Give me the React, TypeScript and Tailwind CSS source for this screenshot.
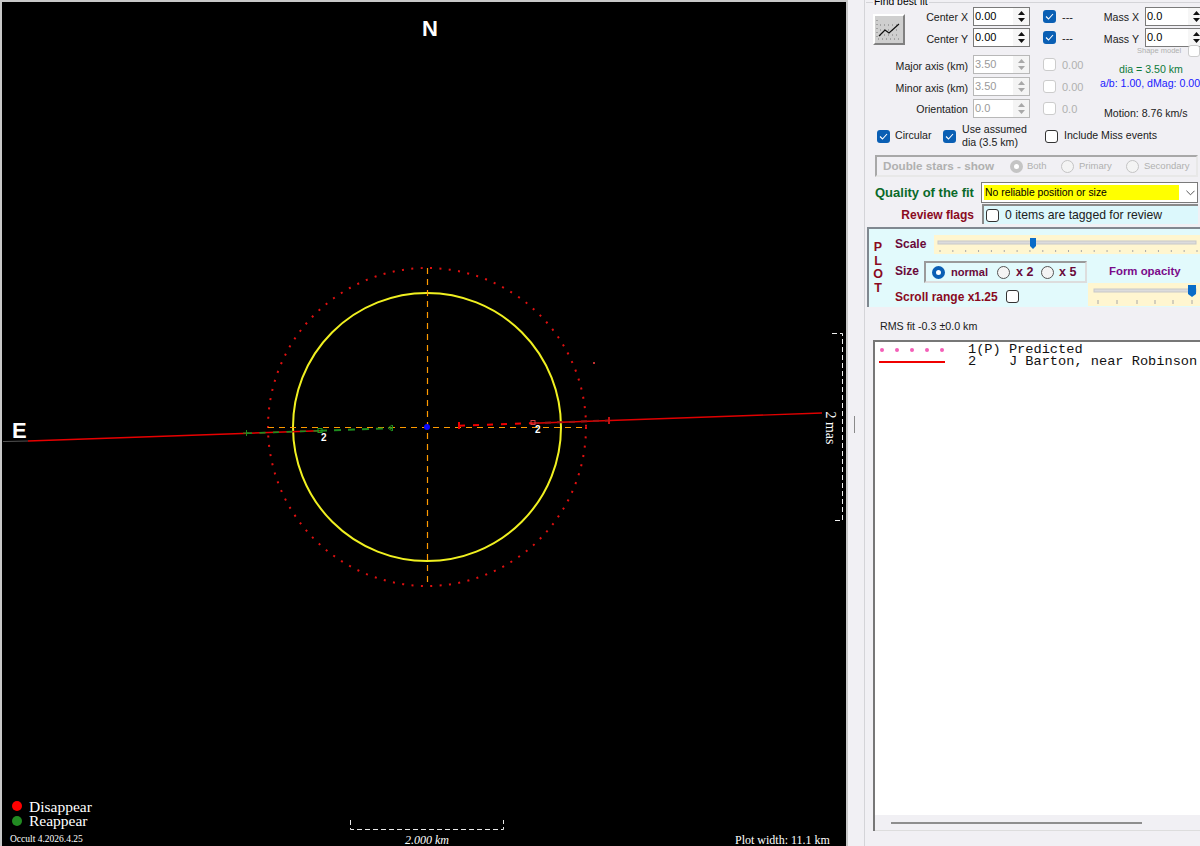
import React from 'react';

const ui = "font-['Liberation_Sans',Arial,sans-serif]";
const serif = "font-['Liberation_Serif','Times_New_Roman',serif]";

function Tick() {
  return (
    <svg viewBox="0 0 13 13" className="block w-[13px] h-[13px]">
      <path d="M3 6.5 L5.5 9 L10 4" fill="none" stroke="#fff" strokeWidth="1.1" />
    </svg>
  );
}

function Check({ on, off }: { on?: boolean; off?: boolean }) {
  if (on) return <span className="block w-[13px] h-[13px] rounded-[3px] bg-[#0a5fb4] shrink-0"><Tick /></span>;
  return <span className={`block w-[13px] h-[13px] rounded-[3px] border bg-white shrink-0 ${off ? 'border-[#cccccc]' : 'border-[#333333]'}`} />;
}

function Radio({ on, off }: { on?: boolean; off?: boolean }) {
  if (on) return <span className={`block w-[13px] h-[13px] rounded-full border-[4px] bg-white shrink-0 ${off ? 'border-[#c4c4c4]' : 'border-[#0a5fb4]'}`} />;
  return <span className={`block w-[13px] h-[13px] rounded-full border bg-[#f4f4f4] shrink-0 ${off ? 'border-[#c4c4c4]' : 'border-[#555555]'}`} />;
}

function Spin({ value, off, w = 'w-[57px]' }: { value: string; off?: boolean; w?: string }) {
  const arrow = off ? '#a8a8a8' : '#111111';
  return (
    <div className={`${w} h-[19px] bg-white border shrink-0 flex ${off ? 'border-[#b8b8b8] text-[#9a9a9a]' : 'border-[#7a7a7a] text-black'}`}>
      <span className="flex-1 text-[11px] leading-[16px] pl-[1px]">{value}</span>
      <span className={`w-[16px] flex flex-col justify-center gap-[3px] items-center ${off ? 'bg-[#f4f4f4]' : 'bg-[#f6f6f6]'}`}>
        <svg viewBox="0 0 7 4" className="w-[7px] h-[4px]"><path d="M3.5 0 L7 4 L0 4 Z" fill={arrow} /></svg>
        <svg viewBox="0 0 7 4" className="w-[7px] h-[4px]"><path d="M3.5 4 L7 0 L0 0 Z" fill={arrow} /></svg>
      </span>
    </div>
  );
}

function FitRow({ label, value, tail, off, h, tight }: { label: string; value: string; tail: string; off?: boolean; h: string; tight?: boolean }) {
  return (
    <div className={`flex items-start ${h}`}>
      <span className={`w-[95px] text-right text-[10.6px] leading-[19px] text-[#202020] whitespace-nowrap ${tight ? 'pt-[1px]' : 'pt-[2px]'}`}>{label}</span>
      <span className="w-[5px]" />
      <Spin value={value} off={off} />
      <span className="w-[13px]" />
      <span className="mt-[3px]"><Check on={!off} off={off} /></span>
      <span className={`ml-[6px] text-[11px] leading-[19px] pt-[1px] ${off ? 'text-[#b0b0b0]' : 'text-[#222222]'}`}>{tail}</span>
    </div>
  );
}

const scaleTicks = Array.from({ length: 21 }, (_, i) => 6 + i * 12.85);

function Plot() {
  const dash = '#ff9a00';
  return (
    <svg viewBox="0 0 844 844" className="block w-[844px] h-[844px]">
      <g transform="translate(-2,-2)">
        <circle cx="427" cy="427" r="159" fill="none" stroke="#e01010" strokeWidth="2" strokeDasharray="2 7.4" />
        <circle cx="427" cy="427" r="134" fill="none" stroke="#f0f020" strokeWidth="2" />
        <line x1="3" y1="441.5" x2="28" y2="441" stroke="#555" strokeWidth="1" />
        <line x1="28" y1="441" x2="320" y2="430.7" stroke="#e80000" strokeWidth="1.4" />
        <line x1="533" y1="423.2" x2="822" y2="413" stroke="#e00000" strokeWidth="1.4" />
        <line x1="427.5" x2="427.5" y1="268" y2="586" stroke={dash} strokeWidth="1.2" strokeDasharray="6 5" />
        <line x1="268" x2="586" y1="427.5" y2="427.5" stroke={dash} strokeWidth="1.2" strokeDasharray="6 5" />
        <line x1="320" y1="430.7" x2="392" y2="428.2" stroke="#1e8c1e" strokeWidth="2" strokeDasharray="7 7" />
        <line x1="246" y1="433.3" x2="320" y2="430.7" stroke="#1e8c1e" strokeWidth="1.6" strokeDasharray="6 7.5" />
        <line x1="459" y1="425.8" x2="533" y2="423.2" stroke="#f00000" strokeWidth="2" strokeDasharray="6 8" />
        <line x1="533" y1="423.2" x2="609" y2="420.5" stroke="#a01010" strokeWidth="2" strokeDasharray="6 6" />
        <circle cx="427" cy="427" r="3" fill="#0a0aff" />
        <path d="M246.5 430 V436 M243 433 L249 433" stroke="#1e8c1e" />
        <path d="M392.5 425 V431 M388 428 L392 425 M388 428 L392 431" stroke="#1e8c1e" fill="none" />
        <rect x="458" y="422" width="2" height="7" fill="#f00000" />
        <rect x="608" y="417" width="2" height="7" fill="#c01010" />
        <rect x="318" y="428.5" width="4" height="4" fill="none" stroke="#1e9c1e" />
        <rect x="531" y="420.5" width="4" height="4" fill="none" stroke="#d04040" />
        <rect x="593" y="362" width="2" height="2" fill="#c03030" />
        <path d="M350.5 820 V829.5 H503.5 V820" fill="none" stroke="#e8e8e8" strokeDasharray="5 3" />
        <path d="M832 333.5 H842.5 V520.5 H832" fill="none" stroke="#f0f0f0" strokeDasharray="5 3" />
      </g>
    </svg>
  );
}

function Canvas() {
  return (
    <div className="relative w-[844px] h-[844px] bg-black overflow-hidden text-white shrink-0">
      <Plot />
      <span className={`absolute left-[420px] top-[14px] text-[22px] leading-[26px] font-bold ${ui}`}>N</span>
      <span className={`absolute left-[10px] top-[416px] text-[22px] leading-[26px] font-bold ${ui}`}>E</span>
      <span className={`absolute left-[319px] top-[430px] text-[10px] leading-[11px] font-bold ${ui}`}>2</span>
      <span className={`absolute left-[533px] top-[422px] text-[10px] leading-[11px] font-bold ${ui}`}>2</span>
      <span className={`absolute left-[806px] top-[418px] w-[44px] text-center text-[14px] leading-[16px] rotate-90 whitespace-nowrap ${serif}`}>2 mas</span>
      <span className="absolute left-[10px] top-[799px] w-[10px] h-[10px] rounded-full bg-[#ff0000]" />
      <span className="absolute left-[10px] top-[814px] w-[10px] h-[10px] rounded-full bg-[#228b22]" />
      <span className={`absolute left-[27px] top-[798px] text-[15.5px] leading-[14px] ${serif}`}>Disappear</span>
      <span className={`absolute left-[27px] top-[812px] text-[15.5px] leading-[14px] ${serif}`}>Reappear</span>
      <span className={`absolute left-[8px] top-[831px] text-[9.5px] leading-[12px] ${serif}`}>Occult 4.2026.4.25</span>
      <span className={`absolute left-[403px] top-[831px] text-[12px] leading-[14px] italic ${serif}`}>2.000 km</span>
      <span className={`absolute left-[733px] top-[831px] text-[12px] leading-[14px] ${serif}`}>Plot width: 11.1 km</span>
    </div>
  );
}

function FitGroup() {
  return (
    <div className="h-[148px] relative">
      <span className="absolute left-[0px] right-0 top-[2px] h-[1px] bg-[#d4d4d8]" />
      <span className="absolute left-[7px] top-[-5px] text-[10.4px] leading-[14px] bg-[#f1f0f4] px-[1px]">Find best fit</span>
      <div className="flex pt-[7px] pl-[7px]">
        <div className="w-[212px] shrink-0">
          <div className="flex h-[40px]">
            <div className="mt-[7px] w-[32px] h-[31px] bg-[#cfcfcf] border-2 border-t-white border-l-white border-r-[#808080] border-b-[#808080] shrink-0">
              <svg viewBox="0 0 28 27" className="w-[28px] h-[27px]">
                <path d="M2 4 V23 H26 M5 19 H25 M5 14 H25 M5 9 H25" fill="none" stroke="#777" strokeDasharray="1 3" />
                <path d="M4 20 L10 14 L14 17 L24 8" fill="none" stroke="#111" strokeWidth="1.2" />
              </svg>
            </div>
            <div className="flex flex-col ml-[-32px]">
              <FitRow label="Center X" value="0.00" tail="---" h="h-[21px]" tight />
              <FitRow label="Center Y" value="0.00" tail="---" h="h-[19px]" />
            </div>
          </div>
          <div className="h-[8px]" />
          <FitRow label="Major axis (km)" value="3.50" tail="0.00" off h="h-[22px]" />
          <FitRow label="Minor axis (km)" value="3.50" tail="0.00" off h="h-[22px]" />
          <FitRow label="Orientation" value="0.0" tail="0.0" off h="h-[22px]" tight />
        </div>
        <div className="flex-1 relative text-[10.6px] leading-[14px] min-w-0">
          <div className="flex h-[21px] items-start">
            <span className="w-[54px] shrink-0 text-right pt-[3px] text-[#202020]">Mass X</span>
            <span className="ml-[6px] shrink-0"><Spin value="0.0" w="w-[60px]" /></span>
          </div>
          <div className="flex h-[19px] items-start">
            <span className="w-[54px] shrink-0 text-right pt-[4px] text-[#202020]">Mass Y</span>
            <span className="ml-[6px] shrink-0"><Spin value="0.0" w="w-[60px]" /></span>
          </div>
          <div className="flex items-center h-[8px]">
            <span className="w-[52px] shrink-0" />
            <span className="text-[7.5px] leading-[10px] text-[#b0b0b0] whitespace-nowrap">Shape model</span>
            <span className="ml-[7px] w-[12px] h-[12px] rounded-[3px] border border-[#cccccc] bg-white shrink-0" />
          </div>
          <div className="mt-[7px] pl-[34px] text-[#0d7a3a] whitespace-nowrap">dia = 3.50 km</div>
          <div className="pl-[15px] text-[#1a1aff] whitespace-nowrap">a/b: 1.00, dMag: 0.00</div>
          <div className="mt-[16px] pl-[19px] text-[#202020] whitespace-nowrap">Motion: 8.76 km/s</div>
        </div>
      </div>
      <div className="flex items-center absolute left-[11px] top-[126px] h-[20px] text-[10.6px] text-[#202020]">
        <Check on />
        <span className="ml-[5px] w-[35px]">Circular</span>
        <span className="ml-[13px]"><Check on /></span>
        <span className="ml-[6px] leading-[13px] w-[70px]">Use assumed dia (3.5 km)</span>
        <span className="ml-[13px]"><Check /></span>
        <span className="ml-[6px] whitespace-nowrap">Include Miss events</span>
      </div>
    </div>
  );
}

function Panel() {
  return (
    <div className={`flex-1 min-w-0 relative bg-[#f1f0f4] h-[846px] overflow-hidden pl-[18px] ${ui}`}>
      <span className="absolute left-[6px] top-[416px] w-[1px] h-[17px] bg-[#8a8a8a]" />
      <span className="absolute left-[16px] top-0 w-[1px] h-full bg-[#d4d4d8]" />

      <FitGroup />

      {/* double stars */}
      <div className="ml-[9px] mt-[7px] w-[323px] h-[22px] border-2 border-[#a8a8a8] border-r-[#e8e8e8] border-b-[#e8e8e8] flex items-center text-[#b0b0b0]">
        <span className="ml-[6px] text-[11.7px] font-bold w-[127px] whitespace-nowrap">Double stars - show</span>
        <Radio on off />
        <span className="ml-[4px] text-[9.5px] w-[34px]">Both</span>
        <Radio off />
        <span className="ml-[5px] text-[9.5px] w-[47px]">Primary</span>
        <Radio off />
        <span className="ml-[5px] text-[9.5px]">Secondary</span>
      </div>

      {/* quality */}
      <div className="flex items-center mt-[5px] h-[21px] ml-[9px]">
        <span className="w-[101px] text-[13px] font-bold text-[#0a6a2a] whitespace-nowrap">Quality of the fit</span>
        <div className="ml-[5px] w-[217px] h-[21px] bg-white border border-[#7a7a7a] flex items-center pl-[2px]">
          <span className="w-[195px] h-[15px] bg-[#ffff00] text-[10.4px] leading-[15px] text-black pl-[1px] whitespace-nowrap">No reliable position or size</span>
          <svg viewBox="0 0 10 6" className="ml-[7px] w-[9px] h-[6px]"><path d="M0.5 0.5 L5 5 L9.5 0.5" fill="none" stroke="#444" /></svg>
        </div>
      </div>
      <div className="flex items-center mt-[1px] h-[20px] ml-[9px]">
        <span className="w-[99px] text-right text-[12px] pt-[1px] font-bold text-[#8a0a1e] whitespace-nowrap">Review flags</span>
        <div className="ml-[8px] w-[216px] h-[20px] bg-[#dcf8fc] border-l-2 border-t-2 border-[#8a8a8a] flex items-center pl-[2px] text-[12.2px] text-[#202020]">
          <Check />
          <span className="ml-[6px] whitespace-nowrap">0 items are tagged for review</span>
        </div>
      </div>

      {/* plot box */}
      <div className="ml-[1px] mt-[3px] w-[333px] h-[80px] bg-[#e2fafc] border-l-2 border-t-2 border-[#808890] flex relative">
        <div className="w-[14px] ml-[2px] mr-[6px] mt-[12px] text-[12.5px] leading-[13.7px] font-bold text-[#8a0a1e] text-center">P<br />L<br />O<br />T</div>
        <div className="flex-1 min-w-0">
          <div className="flex h-[26px] items-start">
            <span className="ml-[4px] mt-[8px] w-[39px] shrink-0 text-[12px] leading-[14px] font-bold text-[#6a0a3a]">Scale</span>
            <div className="mt-[6px] w-[272px] shrink-0 h-[19px] bg-[#fff6d0]">
              <svg viewBox="0 0 272 19" className="block w-full h-full">
                <rect x="4" y="6" width="258" height="3" fill="#dcdcdc" stroke="#c8c8c8" />
                {scaleTicks.map(t => <line key={t} x1={t} x2={t} y1="15" y2="17" stroke="#a8a8a8" />)}
                <path d="M96 3 H102 V11 L99 14 L96 11 Z" fill="#0a6cc8" />
              </svg>
            </div>
          </div>
          <div className="flex h-[26px] items-start mt-[2px]">
            <span className="ml-[4px] mt-[7px] w-[29px] shrink-0 text-[12px] leading-[14px] font-bold text-[#6a0a3a]">Size</span>
            <div className="w-[163px] shrink-0 h-[22px] mt-[4px] border-2 border-[#9a9a9a] border-r-[#dddddd] border-b-[#dddddd] flex items-center pl-[6px] text-[11.1px] font-bold text-[#6a0a3a]">
              <Radio on />
              <span className="ml-[6px] w-[37px]">normal</span>
              <span className="ml-[9px]"><Radio /></span>
              <span className="ml-[6px] w-[18px] text-[12.5px]">x 2</span>
              <span className="ml-[7px]"><Radio /></span>
              <span className="ml-[5px] text-[12.5px]">x 5</span>
            </div>
            <span className="ml-[22px] mt-[7px] text-[11.4px] leading-[14px] font-bold text-[#7a0a8a] whitespace-nowrap">Form opacity</span>
          </div>
          <div className="flex h-[24px] items-start">
            <span className="ml-[4px] mt-[7px] w-[104px] shrink-0 text-[12px] leading-[14px] font-bold text-[#8a0a1e] whitespace-nowrap">Scroll range x1.25</span>
            <span className="ml-[7px] mt-[7px]"><Check /></span>
            <div className="ml-[69px] w-[114px] shrink-0 h-[23px] bg-[#fff6d0]">
              <svg viewBox="0 0 114 23" className="block w-full h-full">
                <rect x="6" y="6" width="102" height="3" fill="#dcdcdc" stroke="#c8c8c8" />
                {[10, 29, 49, 67, 85, 104].map(t => <line key={t} x1={t} x2={t} y1="17" y2="21" stroke="#a8a8a8" />)}
                <path d="M100 2 H108 V11 L104 14 L100 11 Z" fill="#0a6cc8" />
              </svg>
            </div>
          </div>
        </div>
      </div>

      {/* list */}
      <div className="ml-[14px] mt-[12px] h-[14px] text-[10.7px] leading-[14px] text-[#202020]">RMS fit -0.3 ±0.0 km</div>
      <div className="ml-[7px] mt-[7px] w-[330px] h-[491px] border-l-2 border-t-2 border-[#777777] flex flex-col">
        <div className="h-[473px] bg-white font-['Liberation_Mono','Courier_New',monospace] text-[13.65px] leading-[12px] text-[#111111] pt-[2px] whitespace-pre">
          <div className="flex">
            <span className="w-[93px] flex items-center gap-[11px] pl-[5px] h-[12px]">
              {[0, 1, 2, 3, 4].map(i => <span key={i} className="block w-[4px] h-[4px] rounded-full bg-[#f45fb8]" />)}
            </span>
            <span>1(P) Predicted</span>
          </div>
          <div className="flex">
            <span className="w-[93px] flex items-center pl-[4px] h-[12px]"><span className="block w-[66px] h-[2px] bg-[#f00000]" /></span>
            <span>2    J Barton, near Robinson</span>
          </div>
        </div>
        <div className="flex-1 flex items-center pl-[16px] border-b border-[#dddddd]">
          <span className="block w-[251px] h-[2px] bg-[#8e8e8e]" />
        </div>
      </div>
    </div>
  );
}

export default function App() {
  return (
    <div className={`flex w-[1200px] h-[846px] overflow-hidden bg-[#f1f0f4] text-black ${ui}`}>
      <div className="w-[848px] h-[846px] pl-[2px] pt-[2px] bg-[#c8c8c8] shrink-0">
        <Canvas />
      </div>
      <Panel />
    </div>
  );
}
